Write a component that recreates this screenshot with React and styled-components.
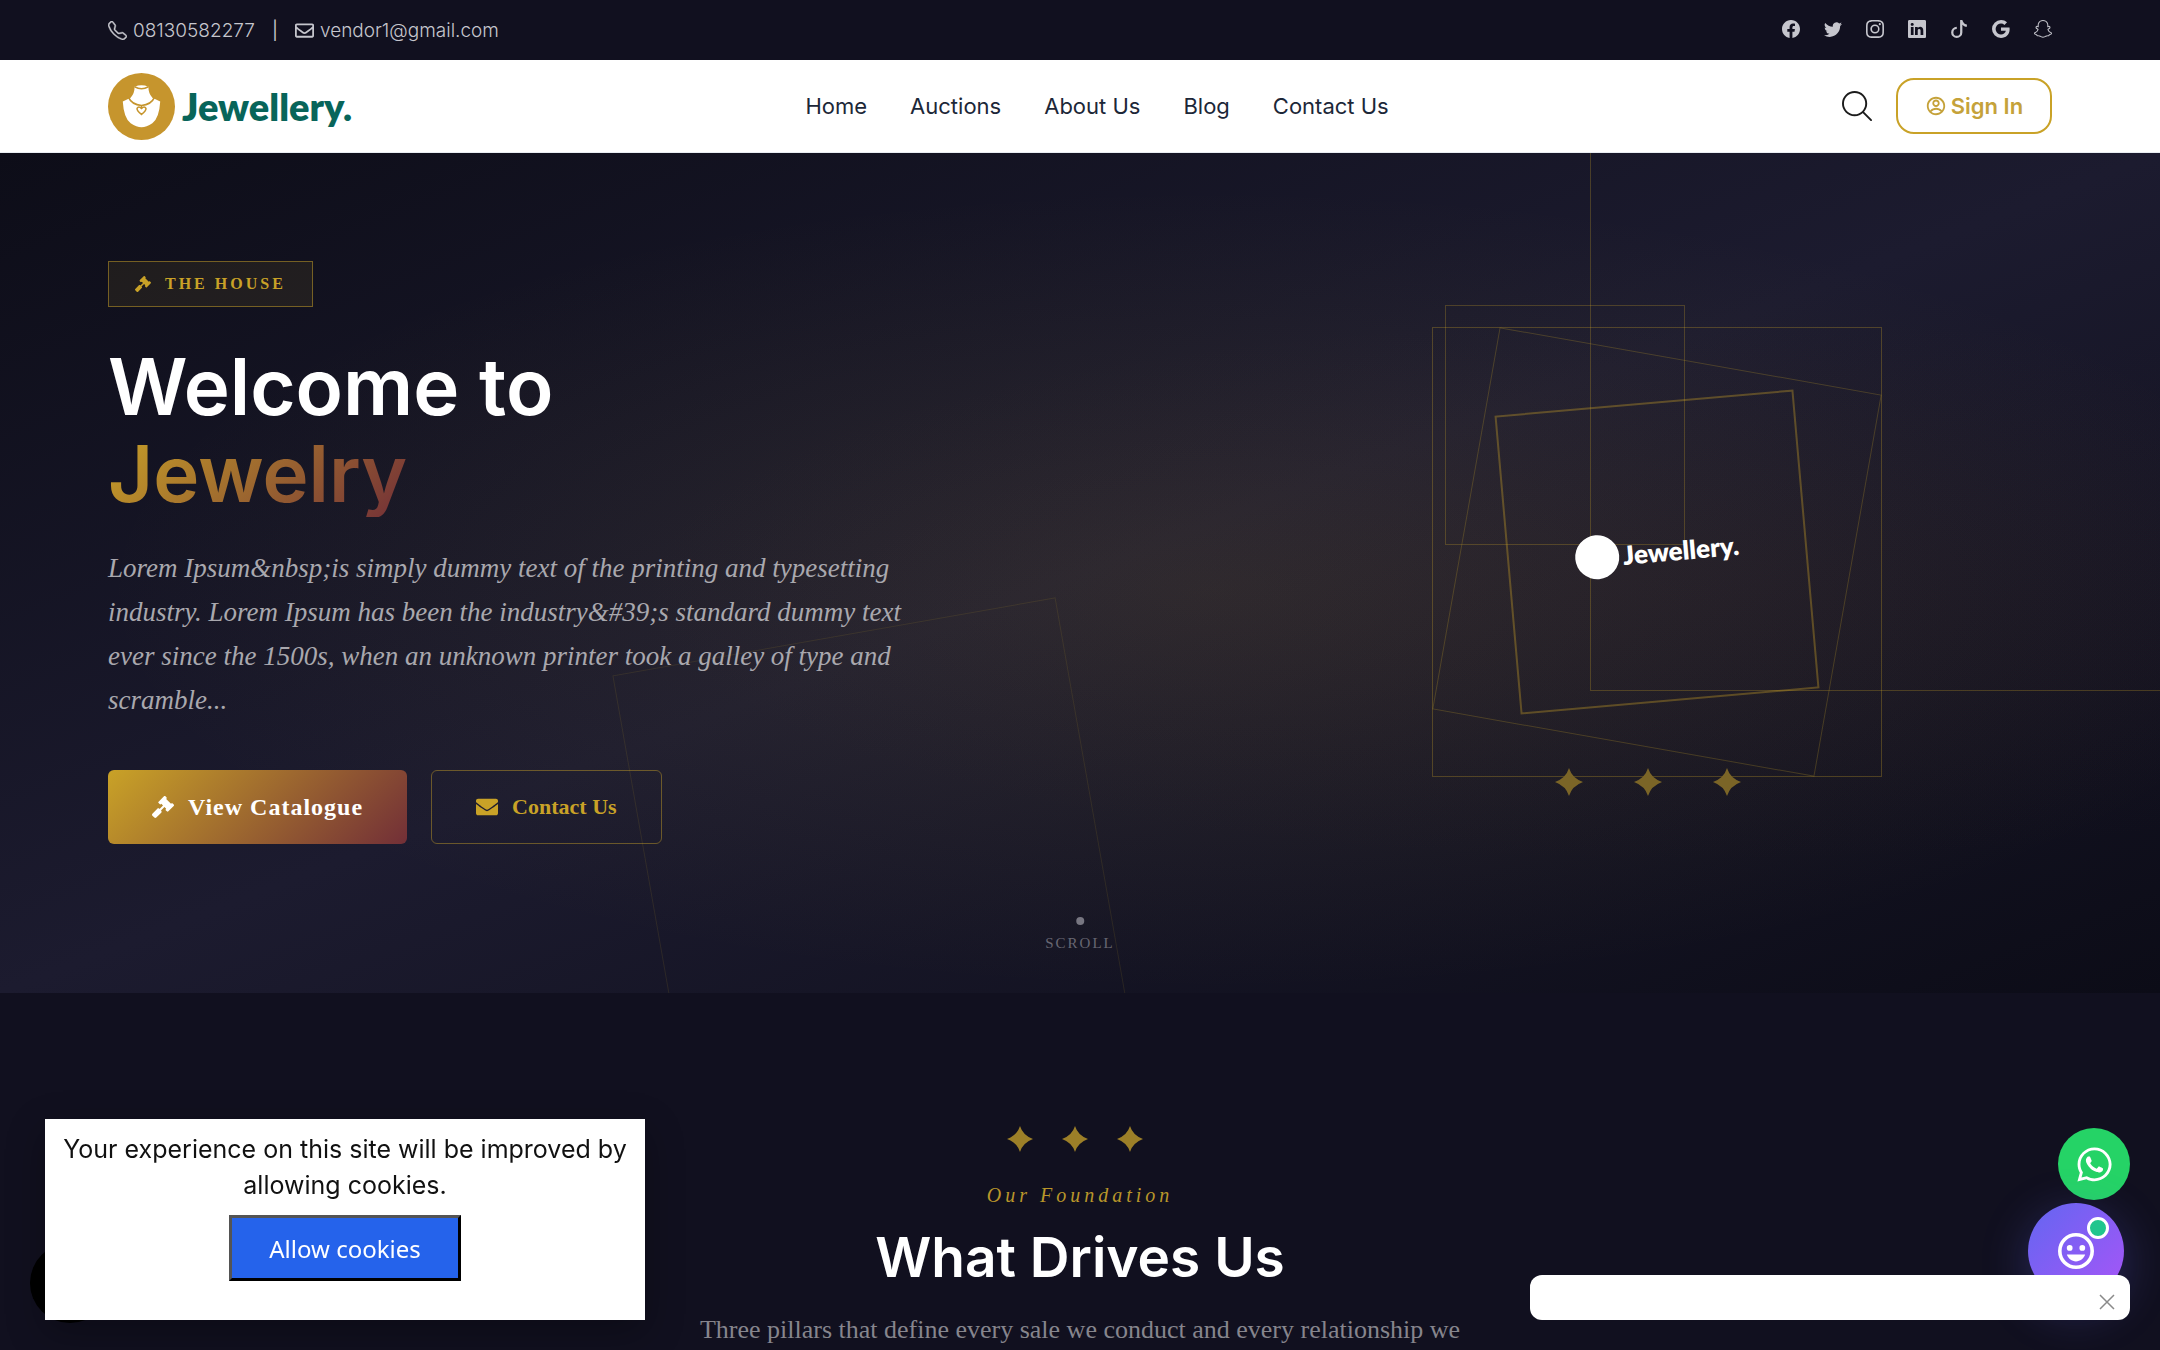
import React, { useState } from 'react'
import styled, { createGlobalStyle } from "styled-components";
import { BsTelephone, BsFacebook, BsTwitter, BsInstagram, BsLinkedin, BsTiktok, BsGoogle, BsSnapchat } from 'react-icons/bs';
import { FaRegEnvelope, FaGavel, FaEnvelope, FaWhatsapp } from 'react-icons/fa';
import { RiAccountCircleLine } from 'react-icons/ri';

const sans = '"Inter", "Noto Sans", sans-serif';
const rounded = '"Noto Sans", "Open Sans", sans-serif';
const serif = '"Liberation Serif", serif';

const socials = [
    { name: 'Facebook', Icon: BsFacebook },
    { name: 'Twitter', Icon: BsTwitter },
    { name: 'Instagram', Icon: BsInstagram },
    { name: 'LinkedIn', Icon: BsLinkedin },
    { name: 'TikTok', Icon: BsTiktok },
    { name: 'Google', Icon: BsGoogle },
    { name: 'Snapchat', Icon: BsSnapchat },
];

const menu = ['Home', 'Auctions', 'About Us', 'Blog', 'Contact Us'];

const Necklace = () => (
    <svg viewBox="0 0 68 68" width="67" height="67" aria-hidden="true">
        <circle cx="34" cy="34" r="34" fill="#c6952d" />
        <path d="M27 14 Q34 11 41 14 Q41 21 45 25 L53 29 Q52 46 45 51 Q39 55 34 55 Q29 55 23 51 Q16 46 15 29 L23 25 Q27 21 27 14Z" fill="#fff" />
        <g fill="none" stroke="#c6952d" strokeWidth="1.6">
            <path d="M27 14 Q34 18 41 14" />
            <path d="M21 25 Q24 32 34 33 Q44 32 47 25" />
            <path d="M34 42 Q29 38 29.500 36 Q31 33 34 36 Q37 33 38.500 36 Q39 38 34 42Z" />
            <path d="M34 33 V36" />
        </g>
    </svg>
);

const Star = ({ size }) => (
    <svg viewBox="0 0 28 28" width={size} height={size} aria-hidden="true">
        <path d="M14 0 Q17 10 28 14 Q17 18 14 28 Q11 18 0 14 Q11 10 14 0Z" fill="currentColor" />
    </svg>
);

const App = () => {
    const [mostrarCookies, setMostrarCookies] = useState(true);
    const [mostrarAviso, setMostrarAviso] = useState(true);

    return (
        <Page>
            <GlobalStyle />
            <TopBar>
                <Contacts>
                    <ContactLink href="tel:08130582277"><BsTelephone />08130582277</ContactLink>
                    <span>|</span>
                    <ContactLink href="mailto:vendor1@gmail.com"><FaRegEnvelope />vendor1@gmail.com</ContactLink>
                </Contacts>
                <Socials>
                    {socials.map(({ name, Icon }) => (
                        <a key={name} href="#" aria-label={name}><Icon /></a>
                    ))}
                </Socials>
            </TopBar>

            <Header>
                <Logo href="#"><Necklace />Jewellery.</Logo>
                <Nav>
                    {menu.map((item) => <a key={item} href="#">{item}</a>)}
                </Nav>
                <Actions>
                    <SearchButton type="button" aria-label="Search">
                        <svg viewBox="0 0 32 32" width="31" height="31" fill="none" stroke="#1b1b1b" strokeWidth="2" strokeLinecap="round">
                            <circle cx="13" cy="13" r="12" />
                            <path d="M22 22 L30 30" />
                        </svg>
                    </SearchButton>
                    <SignIn href="#"><RiAccountCircleLine />Sign In</SignIn>
                </Actions>
            </Header>

            <Hero>
                <LineSquare className="large" />
                <LineSquare className="small" />
                <LineSquare className="tilted" />
                <HeroText>
                    <Badge><FaGavel />THE HOUSE</Badge>
                    <Title>Welcome to<em>Jewelry</em></Title>
                    <Lead>
                        Lorem Ipsum&amp;nbsp;is simply dummy text of the printing and typesetting<br />
                        industry. Lorem Ipsum has been the industry&amp;#39;s standard dummy text<br />
                        ever since the 1500s, when an unknown printer took a galley of type and<br />
                        scramble...
                    </Lead>
                    <Buttons>
                        <PrimaryLink href="#"><FaGavel />View Catalogue</PrimaryLink>
                        <OutlineLink href="#"><FaEnvelope />Contact Us</OutlineLink>
                    </Buttons>
                </HeroText>
                <Visual>
                    <OuterFrame>
                        <TiltFrame />
                        <InnerFrame>
                            <LogoWhite><i />Jewellery.</LogoWhite>
                        </InnerFrame>
                        <FrameStars>
                            <Star size={28} /><Star size={28} /><Star size={28} />
                        </FrameStars>
                    </OuterFrame>
                </Visual>
                <Scroll>SCROLL</Scroll>
            </Hero>

            <Foundation>
                <Stars><Star size={26} /><Star size={26} /><Star size={26} /></Stars>
                <Eyebrow>Our Foundation</Eyebrow>
                <h2>What Drives Us</h2>
                <p>Three pillars that define every sale we conduct and every relationship we</p>
            </Foundation>

            <BlackDot />
            {mostrarCookies && (
                <Cookies>
                    <p>Your experience on this site will be improved by allowing cookies.</p>
                    <button type="button" onClick={() => setMostrarCookies(false)}>Allow cookies</button>
                </Cookies>
            )}

            <Floating>
                <WhatsApp href="#" aria-label="WhatsApp"><FaWhatsapp /></WhatsApp>
                <Chat type="button" aria-label="Chat">
                    <svg viewBox="2 2 20 20" width="36" height="36" fill="#fff">
                        <path d="M12 2a10 10 0 1 0 0 20a10 10 0 0 0 0-20zm0 18a8 8 0 1 1 0-16a8 8 0 0 1 0 16z" />
                        <circle cx="8.500" cy="10.300" r="1.600" />
                        <circle cx="15.500" cy="10.300" r="1.600" />
                        <path d="M6.900 14h10.200c-.8 2.300-2.800 3.800-5.100 3.800s-4.300-1.500-5.100-3.800z" />
                    </svg>
                    <Online />
                </Chat>
            </Floating>
            {mostrarAviso && (
                <Notice>
                    <button type="button" aria-label="Close" onClick={() => setMostrarAviso(false)}>
                        <svg viewBox="0 0 16 16" width="16" height="16" stroke="#8a8a8a" strokeWidth="1.500">
                            <path d="M1 1 L15 15 M15 1 L1 15" />
                        </svg>
                    </button>
                </Notice>
            )}
        </Page>
    );
}

const GlobalStyle = createGlobalStyle`
  * { box-sizing: border-box; }

  body {
    margin: 0;
    background: #11101f;
    font-family: ${sans};
  }

  #root {
    height: 100vh;
    overflow: hidden;
  }

  a {
    color: inherit;
    text-decoration: none;
  }

  button {
    font: inherit;
    cursor: pointer;
  }

  svg {
    display: block;
    flex-shrink: 0;
  }
`

const Page = styled.div`
  min-height: 100vh;
`

const TopBar = styled.div`
  display: flex;
  align-items: center;
  justify-content: space-between;
  height: 60px;
  padding: 0 5%;
  background: #11101f;
  color: #c6c6cd;
  font-size: 18px;
`

const Contacts = styled.div`
  display: flex;
  align-items: center;
  gap: 17px;
`

const ContactLink = styled.a`
  display: flex;
  align-items: center;
  gap: 6px;
  font-size: 19px;
  font-weight: 300;

  svg {
    stroke: currentColor;
    stroke-width: 0.3;
  }
`

const Socials = styled.div`
  display: flex;
  gap: 24px;
  padding-bottom: 3px;
`

const Header = styled.header`
  display: flex;
  align-items: center;
  justify-content: space-between;
  height: 93px;
  padding: 0 5%;
  background: #fff;
  border-bottom: 1px solid #e9edf2;
`

const Logo = styled.a`
  display: flex;
  align-items: center;
  gap: 7px;
  color: #08655a;
  font-family: Lato, sans-serif;
  font-size: 38px;
  font-weight: 800;
`

const Nav = styled.nav`
  display: flex;
  gap: 43px;
  color: #1c2738;
  font-size: 22px;
  font-weight: 400;
`

const Actions = styled.div`
  display: flex;
  align-items: center;
  gap: 23px;
`

const SearchButton = styled.button`
  padding: 0;
  border: 0;
  background: none;
`

const SignIn = styled.a`
  display: flex;
  align-items: center;
  justify-content: center;
  gap: 4px;
  width: 156px;
  height: 56px;
  border: 2px solid #c9a227;
  border-radius: 18px;
  color: #c5a23a;
  font-size: 22px;
  font-weight: 600;
`

const Hero = styled.section`
  position: relative;
  display: grid;
  grid-template-columns: 1.4fr 1fr;
  gap: 48px;
  align-items: center;
  height: 840px;
  padding: 0 5%;
  overflow: hidden;
  background:
    radial-gradient(ellipse at 56% 52%, rgba(190, 160, 50, 0.11), transparent 65%),
    radial-gradient(ellipse at 78% 52%, rgba(114, 60, 50, 0.06), transparent 45%),
    linear-gradient(to bottom right, #0d0d18 0%, #1c1b2f 50%, #0c0c17 100%);
`

const LineSquare = styled.div`
  position: absolute;
  border: 1px solid rgba(201, 162, 39, 0.28);

  &.large {
    width: 600px;
    height: 600px;
    top: -62px;
    right: -30px;
  }

  &.small {
    width: 240px;
    height: 240px;
    top: 152px;
    right: 22%;
  }

  &.tilted {
    width: 450px;
    height: 450px;
    left: 30%;
    top: 480px;
    transform: rotate(-10deg);
    border-color: rgba(201, 162, 39, 0.12);
  }
`

const HeroText = styled.div`
  position: relative;
  padding-bottom: 41px;
`

const Badge = styled.div`
  display: inline-flex;
  align-items: center;
  gap: 14px;
  height: 46px;
  padding: 0 26px;
  border: 1px solid rgba(201, 162, 39, 0.5);
  background: rgba(201, 162, 39, 0.09);
  color: #c9a227;
  font-family: ${serif};
  font-size: 16px;
  font-weight: 700;
  letter-spacing: 3px;
`

const Title = styled.h1`
  margin: 36px 0 29px;
  color: #fff;
  font-family: ${sans};
  font-size: 78px;
  font-weight: 600;
  line-height: 87px;

  em {
    display: block;
    width: fit-content;
    font-style: normal;
    background: linear-gradient(135deg, #c9a227, #722f37);
    background-clip: text;
    color: transparent;
  }
`

const Lead = styled.p`
  margin: 0 0 48px;
  color: #a9a8ae;
  font-family: ${serif};
  font-size: 27px;
  font-style: italic;
  line-height: 44px;
`

const Buttons = styled.div`
  display: flex;
  gap: 24px;
`

const HeroLink = styled.a`
  display: flex;
  align-items: center;
  justify-content: center;
  gap: 14px;
  height: 74px;
  padding: 0 44px;
  border-radius: 6px;
  font-family: ${serif};
  font-size: 22px;
  font-weight: 700;

  svg {
    font-size: 22px;
  }
`

const PrimaryLink = styled(HeroLink)`
  background: linear-gradient(135deg, #c9a227, #722f37);
  color: #fff;
  font-size: 24px;
  letter-spacing: 1px;
`

const OutlineLink = styled(HeroLink)`
  border: 1px solid rgba(201, 162, 39, 0.45);
  color: #c9a227;
`

const Visual = styled.div`
  display: flex;
  justify-content: center;
  margin-top: -42px;
`

const OuterFrame = styled.div`
  position: relative;
  display: flex;
  align-items: center;
  justify-content: center;
  width: 450px;
  height: 450px;
  border: 1px solid rgba(201, 162, 39, 0.3);
`

const TiltFrame = styled.div`
  position: absolute;
  width: 388px;
  height: 388px;
  border: 1px solid rgba(201, 162, 39, 0.25);
  transform: rotate(10deg);
`

const InnerFrame = styled.div`
  display: flex;
  align-items: center;
  justify-content: center;
  width: 300px;
  height: 300px;
  border: 2px solid rgba(201, 162, 39, 0.36);
  transform: rotate(-5deg);
`

const LogoWhite = styled.div`
  display: flex;
  align-items: center;
  gap: 4px;
  color: #fff;
  font-family: Lato, sans-serif;
  font-size: 26px;
  font-weight: 800;

  i {
    width: 44px;
    height: 44px;
    border-radius: 50%;
    background: #fff;
  }
`

const FrameStars = styled.div`
  position: absolute;
  bottom: -20px;
  left: 122px;
  display: flex;
  gap: 51px;
  color: #7b6527;
`

const Scroll = styled.div`
  position: absolute;
  bottom: 41px;
  left: 50%;
  transform: translateX(-50%);
  display: flex;
  flex-direction: column;
  align-items: center;
  gap: 10px;
  color: #686773;
  font-family: ${serif};
  font-size: 15px;
  letter-spacing: 2px;

  &::before {
    content: "";
    width: 8px;
    height: 8px;
    border-radius: 50%;
    background: #777681;
  }
`

const Foundation = styled.section`
  display: flex;
  flex-direction: column;
  align-items: center;
  padding: 133px 5% 0;
  background: #11101f;

  h2 {
    margin: 16px 0 17px;
    color: #fff;
    font-family: ${sans};
    font-size: 55px;
    font-weight: 600;
    line-height: 68px;
  }

  p {
    margin: 0;
    color: #86858d;
    font-family: ${serif};
    font-size: 26px;
    line-height: 44px;
    white-space: nowrap;
  }
`

const Stars = styled.div`
  display: flex;
  gap: 29px;
  margin-right: 10px;
  color: #9c7f28;
`

const Eyebrow = styled.div`
  margin-top: 31px;
  color: #b9962a;
  font-family: ${serif};
  font-size: 20px;
  font-style: italic;
  line-height: 24px;
  letter-spacing: 4px;
`

const BlackDot = styled.div`
  position: fixed;
  left: 30px;
  bottom: 27px;
  width: 80px;
  height: 80px;
  border-radius: 50%;
  background: #000;
`

const Cookies = styled.div`
  position: fixed;
  left: 45px;
  bottom: 30px;
  width: 600px;
  height: 201px;
  padding: 12px;
  background: #fff;
  box-shadow: 0 12px 36px rgba(0, 0, 0, 0.3);
  color: #111;
  text-align: center;

  p {
    margin: 0 0 12px;
    font-size: 25px;
    line-height: 36px;
  }

  button {
    height: 66px;
    padding: 0 37px;
    border: 3px outset #000;
    background: #2563eb;
    color: #fff;
    font-family: ${rounded};
    font-size: 24px;
  }
`

const Floating = styled.div`
  position: fixed;
  right: 30px;
  bottom: 51px;
  display: flex;
  flex-direction: column;
  align-items: flex-end;
  gap: 3px;
`

const WhatsApp = styled.a`
  display: grid;
  place-items: center;
  width: 72px;
  height: 72px;
  border-radius: 50%;
  background: #25d366;
  color: #fff;
  font-size: 39px;
`

const Chat = styled.button`
  position: relative;
  display: grid;
  place-items: center;
  width: 96px;
  height: 96px;
  margin-right: 6px;
  padding: 0;
  border: 0;
  border-radius: 50%;
  background: linear-gradient(135deg, #6366f1, #a855f7);
  box-shadow: 0 12px 48px rgba(99, 102, 241, 0.3);
`

const Online = styled.span`
  position: absolute;
  top: 14px;
  right: 15px;
  width: 22px;
  height: 22px;
  border: 3px solid #fff;
  border-radius: 50%;
  background: #20c58d;
`

const Notice = styled.div`
  position: fixed;
  right: 30px;
  bottom: 30px;
  display: flex;
  align-items: center;
  justify-content: flex-end;
  width: 600px;
  height: 45px;
  padding: 9px 15px 0;
  border-radius: 12px;
  background: #fff;

  button {
    padding: 0;
    border: 0;
    background: none;
  }
`

export default App
